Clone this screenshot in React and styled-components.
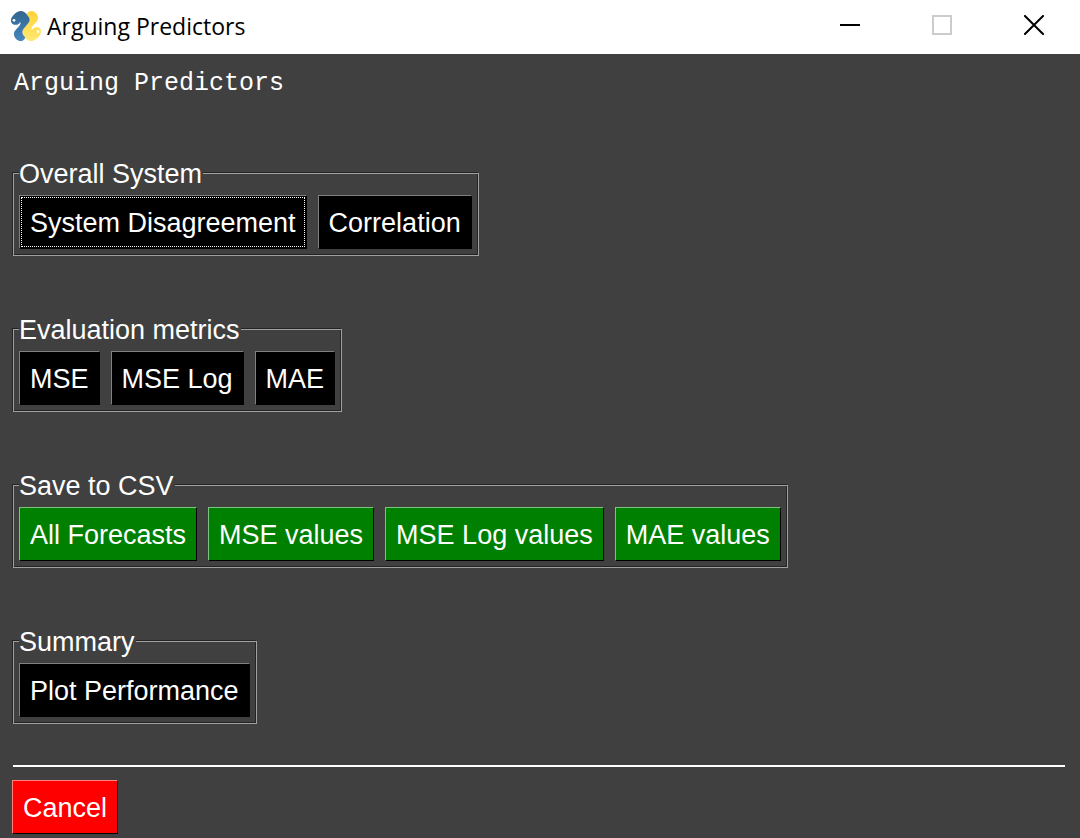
import React from 'react';
import styled, { createGlobalStyle } from 'styled-components';

const GlobalStyle = createGlobalStyle`
  *, *::before, *::after { box-sizing: border-box; }
  body {
    margin: 0;
    background: #404040;
    color: #fff;
    font-family: "Liberation Sans", Arial, sans-serif;
    font-size: 27px;
    line-height: 31px;
  }
`;

const Window = styled.div`
  display: flex;
  flex-direction: column;
  min-height: 100vh;
`;

const TitleBar = styled.header`
  display: flex;
  align-items: center;
  justify-content: space-between;
  height: 54px;
  padding-left: 10px;
  background: #fff;
  color: #000;
`;

const TitleGroup = styled.div`
  display: flex;
  align-items: center;
  gap: 5px;
  padding-bottom: 2px;
`;

const TitleText = styled.span`
  font-family: "Open Sans", "Segoe UI", sans-serif;
  font-size: 23px;
  line-height: 32px;
  white-space: nowrap;
`;

const WindowControls = styled.div`
  display: flex;
  align-self: stretch;
`;

const ControlButton = styled.button`
  display: flex;
  align-items: center;
  justify-content: center;
  width: 92px;
  height: 50px;
  padding: 0;
  border: 0;
  background: transparent;
  color: ${({ disabled }) => (disabled ? '#ccc' : '#000')};
`;

const Content = styled.main`
  display: flex;
  flex-direction: column;
  align-items: flex-start;
  padding: 14px 15px 4px 12px;
`;

const Heading = styled.h1`
  margin: 0 0 58px 2px;
  font-family: "Liberation Mono", Consolas, monospace;
  font-size: 25px;
  font-weight: 400;
  line-height: 31px;
`;

const Groups = styled.div`
  display: flex;
  flex-direction: column;
  align-items: flex-start;
  gap: 57px;
`;

const Frame = styled.fieldset`
  min-width: 0;
  margin: 0 0 0 1px;
  padding: 5px 6px 6px 5px;
  border: 1px solid #a0a0a0;
  box-shadow: inset -1px -1px #242424, -1px -1px #242424;
`;

const FrameLabel = styled.legend`
  padding: 2px 1px 0 0;
  background: #404040;
`;

const ButtonRow = styled.div`
  display: flex;
  flex-wrap: wrap;
  gap: 11px;
`;

const tones = {
  black: { face: '#000', light: '#808080' },
  green: { face: '#008000', light: '#80c080' },
  red: { face: '#f00', light: '#ff8080' },
};

const ActionButton = styled.button`
  height: 54px;
  padding: 2px 10px 0;
  border: 1px solid #000;
  border-top-color: ${({ $tone }) => tones[$tone].light};
  border-left-color: ${({ $tone }) => tones[$tone].light};
  background: ${({ $tone }) => tones[$tone].face};
  color: #fff;
  font: inherit;
  white-space: nowrap;
  outline: ${({ $focused }) => ($focused ? '1px dotted #fff' : 'none')};
  outline-offset: -3px;
`;

const Divider = styled.hr`
  align-self: stretch;
  height: 2px;
  margin: 41px 0 13px 1px;
  border: 0;
  background: #fff;
`;

const groups = [
  { label: 'Overall System', tone: 'black', actions: ['System Disagreement', 'Correlation'] },
  { label: 'Evaluation metrics', tone: 'black', actions: ['MSE', 'MSE Log', 'MAE'] },
  {
    label: 'Save to CSV',
    tone: 'green',
    actions: ['All Forecasts', 'MSE values', 'MSE Log values', 'MAE values'],
  },
  { label: 'Summary', tone: 'black', actions: ['Plot Performance'] },
];

const snake =
  'M62 30C70 30 76 34 80 40C84 46 90 50 89 58C88 66 82 69 78 75C74 81 68 84 67 92C66 100 72 104 76 110C72 117 68 120 62 120C53 120 43 111 42 101C41 90 49 85 56 77C60 72 63 68 61 63C57 70 50 73 42 71C34 69 31 60 34 52C38 43 51 30 62 30Z';

function Logo() {
  return (
    <svg width="32" height="32" viewBox="30 27 96 96" aria-hidden="true">
      <defs>
        <linearGradient id="blue" x1="0" y1="0" x2="0" y2="1">
          <stop offset="0" stopColor="#30658f" />
          <stop offset="1" stopColor="#4587bd" />
        </linearGradient>
        <linearGradient id="yellow" x1="0" y1="0" x2="0" y2="1">
          <stop offset="0" stopColor="#ffe873" />
          <stop offset="1" stopColor="#ffd336" />
        </linearGradient>
      </defs>
      <path d={snake} fill="url(#yellow)" transform="rotate(180 78 75)" />
      <path d={snake} fill="url(#blue)" />
      <circle cx="42" cy="58" r="4" fill="#fff" />
      <circle cx="114" cy="92" r="4" fill="#fff" />
    </svg>
  );
}

export default function App() {
  return (
    <Window>
      <GlobalStyle />
      <TitleBar>
        <TitleGroup>
          <Logo />
          <TitleText>Arguing Predictors</TitleText>
        </TitleGroup>
        <WindowControls>
          <ControlButton type="button" aria-label="Minimize">
            <svg width="20" height="20" viewBox="0 0 20 20">
              <path d="M0 10H20" stroke="currentColor" strokeWidth="2" />
            </svg>
          </ControlButton>
          <ControlButton type="button" aria-label="Maximize" disabled>
            <svg width="20" height="20" viewBox="0 0 20 20">
              <rect x="1" y="1" width="18" height="18" fill="none" stroke="currentColor" strokeWidth="2" />
            </svg>
          </ControlButton>
          <ControlButton type="button" aria-label="Close">
            <svg width="20" height="20" viewBox="0 0 20 20">
              <path d="M1 1L19 19M19 1L1 19" stroke="currentColor" strokeWidth="2" strokeLinecap="square" />
            </svg>
          </ControlButton>
        </WindowControls>
      </TitleBar>
      <Content>
        <Heading>Arguing Predictors</Heading>
        <Groups>
          {groups.map(({ label, tone, actions }, groupIndex) => (
            <Frame key={label}>
              <FrameLabel>{label}</FrameLabel>
              <ButtonRow>
                {actions.map((action, index) => (
                  <ActionButton
                    key={action}
                    type="button"
                    $tone={tone}
                    $focused={groupIndex === 0 && index === 0}
                  >
                    {action}
                  </ActionButton>
                ))}
              </ButtonRow>
            </Frame>
          ))}
        </Groups>
        <Divider />
        <ActionButton type="button" $tone="red">Cancel</ActionButton>
      </Content>
    </Window>
  );
}
